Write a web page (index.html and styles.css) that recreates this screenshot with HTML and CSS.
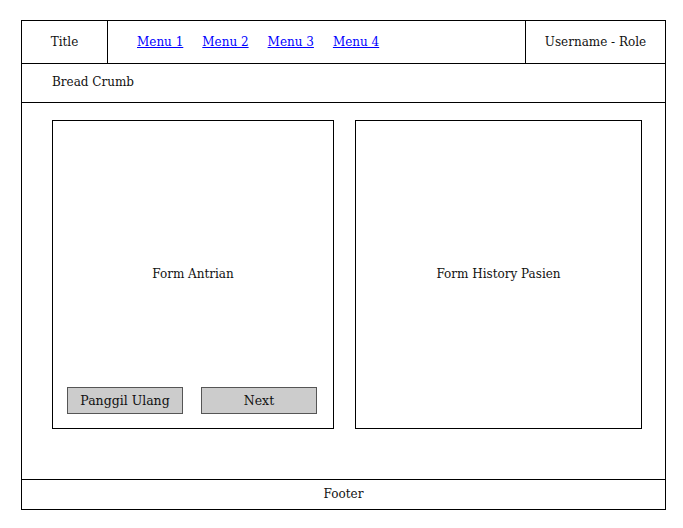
FILE: index.html
```html
<!DOCTYPE html>
<html>
<head>
<meta charset="utf-8">
<link rel="stylesheet" href="styles.css">
</head>
<body>
<div class="frame">
  <header class="header">
    <div class="title">Title</div>
    <nav class="menu">
      <a href="#">Menu 1</a>
      <a href="#">Menu 2</a>
      <a href="#">Menu 3</a>
      <a href="#">Menu 4</a>
    </nav>
    <div class="user">Username - Role</div>
  </header>
  <div class="crumb">Bread Crumb</div>
  <main class="main">
    <section class="panel panel-left">
      <div class="label">Form Antrian</div>
      <div class="buttons">
        <button class="btn">Panggil Ulang</button>
        <button class="btn">Next</button>
      </div>
    </section>
    <section class="panel panel-right">
      <div class="label">Form History Pasien</div>
    </section>
  </main>
  <footer class="footer">Footer</footer>
</div>
</body>
</html>
```

FILE: styles.css
```css
* { box-sizing: border-box; }
html, body { margin: 0; padding: 0; background: #fff; }
body {
  font-family: "DejaVu Serif", serif;
  font-size: 12px;
  color: #111;
}
.frame {
  margin: 20px 0 0 21px;
  width: 645px;
  height: 490px;
  border: 1px solid #000;
  display: flex;
  flex-direction: column;
}
.header {
  height: 43px;
  border-bottom: 1px solid #000;
  display: flex;
  align-items: stretch;
}
.title {
  width: 86px;
  border-right: 1px solid #000;
  display: flex;
  align-items: center;
  justify-content: center;
}
.menu {
  flex: 1;
  display: flex;
  align-items: center;
  padding-left: 29px;
  gap: 19px;
}
.menu a { color: #00f; text-decoration: underline; }
.user {
  width: 140px;
  border-left: 1px solid #000;
  display: flex;
  align-items: center;
  justify-content: center;
}
.crumb {
  height: 39px;
  border-bottom: 1px solid #000;
  display: flex;
  align-items: center;
  padding-left: 30px;
  padding-bottom: 2px;
}
.main {
  flex: 1;
  display: flex;
  align-items: flex-start;
  padding: 17px 0 0 30px;
  gap: 21px;
}
.panel {
  height: 309px;
  border: 1px solid #000;
  display: grid;
  grid-template-areas: "a";
}
.panel-left { width: 282px; }
.panel-right { width: 287px; }
.label {
  grid-area: a;
  align-self: center;
  justify-self: center;
  padding-bottom: 2px;
}
.buttons {
  grid-area: a;
  align-self: end;
  display: flex;
  gap: 18px;
  padding: 0 0 14px 14px;
}
.btn {
  width: 116px;
  height: 27px;
  background: #ccc;
  border: 1px solid #555;
  font-family: "DejaVu Serif", serif;
  font-size: 12.5px;
  color: #111;
  padding: 0;
}
.footer {
  height: 30px;
  border-top: 1px solid #000;
  display: flex;
  align-items: center;
  justify-content: center;
  padding-bottom: 2px;
}
```
